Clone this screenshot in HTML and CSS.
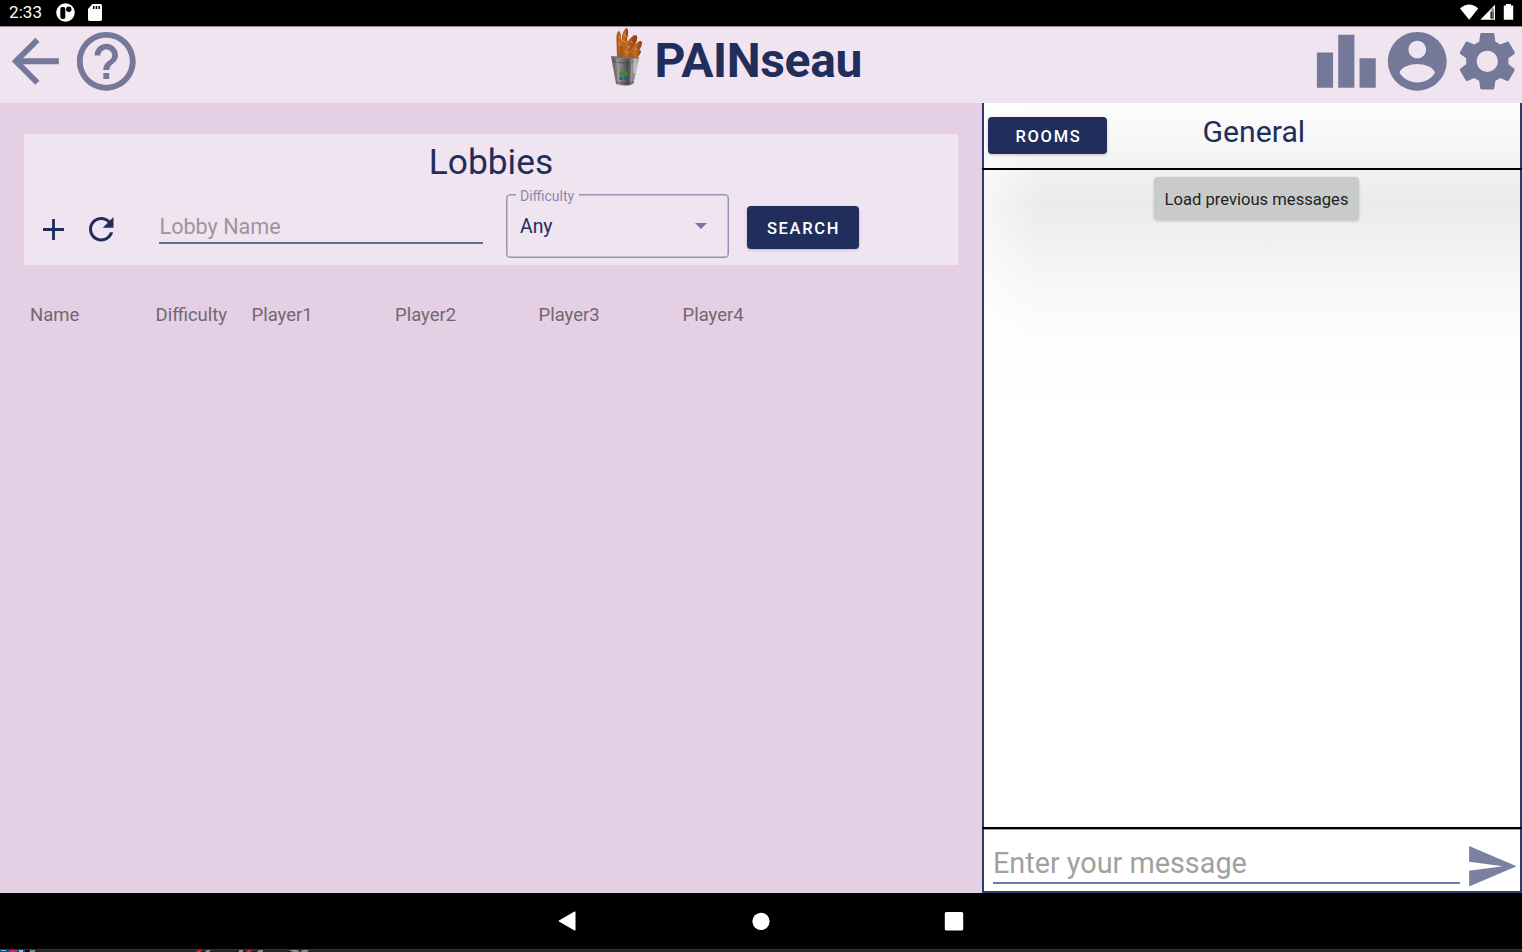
FILE: index.html
```html
<!DOCTYPE html>
<html lang="en">
<head>
<meta charset="utf-8">
<title>PAINseau</title>
<link rel="stylesheet" href="styles.css">
</head>
<body>
<div class="screen">
  <div class="status">
    <span class="clock">2:33</span>
    <svg class="st-app" viewBox="0 0 19 19"><circle cx="9.5" cy="9.5" r="9.3" fill="#fff"/><rect x="4.3" y="4" width="5" height="12" rx="2" fill="#000"/><circle cx="12.8" cy="6.3" r="2.7" fill="#000"/></svg>
    <svg class="st-sd" viewBox="0 0 14 17"><path d="M4.5 0H12.6Q14 0 14 1.400V15.600Q14 17 12.600 17H1.400Q0 17 0 15.600V5Z" fill="#fff"/><path d="M5 2h1.500v3H5zM7.700 2h1.500v3H7.700zM10.400 2h1.500v3h-1.500z" fill="#000"/></svg>
    <svg class="st-right" viewBox="0 0 56 18"><path d="M0 4.500Q9.200-3.300 18.300 4.500L9.200 15.700Z" fill="#fff"/><path d="M35 .8V15.700H20.300Z" fill="#fff"/><path d="M30.500 7.500h3.300v7h-3.300z" fill="#000"/><path d="M31.700 4.300h2v9.500h-2z" fill="#777"/><path d="M46 0h5v1.500h2.200V15.700H43.800V1.500H46z" fill="#fff"/></svg>
  </div>
  <header class="top">
    <div class="icons">
      <svg viewBox="0 0 24 24"><path d="M20 11H7.830l5.590-5.590L12 4l-8 8 8 8 1.410-1.410L7.830 13H20v-2z"/></svg>
      <svg viewBox="0 0 24 24"><path d="M11 18h2v-2h-2v2zm1-16C6.480 2 2 6.480 2 12s4.480 10 10 10 10-4.480 10-10S17.520 2 12 2zm0 18c-4.410 0-8-3.590-8-8s3.590-8 8-8 8 3.590 8 8-3.590 8-8 8zm0-14c-2.210 0-4 1.790-4 4h2c0-1.100.9-2 2-2s2 .9 2 2c0 2-3 1.750-3 5h2c0-2.250 3-2.500 3-5 0-2.210-1.790-4-4-4z"/></svg>
    </div>
    <div class="brand">
      <svg class="bucket" viewBox="0 0 32 58">
        <defs>
          <linearGradient id="metal"><stop offset="0" stop-color="#5b5b5b"/><stop offset=".3" stop-color="#8d8d8b"/><stop offset=".6" stop-color="#4a4a4b"/><stop offset=".82" stop-color="#9b9b9b"/><stop offset="1" stop-color="#77777a"/></linearGradient>
          <linearGradient id="crust"><stop offset="0" stop-color="#96450f"/><stop offset=".5" stop-color="#c36d24"/><stop offset="1" stop-color="#8b3d0e"/></linearGradient>
        </defs>
        <path d="M7 30L6.500 9Q7 3 9 3Q11 4 11 10L12 30Z" fill="url(#crust)"/>
        <path d="M10 30L12 8Q14 0 17 0Q19 3 17.500 9L15 30Z" fill="url(#crust)"/>
        <path d="M14 30L20 12Q24 5 27 8Q28 11 25 17L19 30Z" fill="url(#crust)"/>
        <path d="M8 30L14 18Q21 8 24 8Q27 10 24 16L17 31Z" fill="url(#crust)"/>
        <path d="M17 30L25 17Q30 11 32 14Q32 19 28 24L23 30Z" fill="url(#crust)"/>
        <path d="M20 30L26 24Q30 21 31 23Q31 26 27 30Z" fill="url(#crust)"/>
        <path d="M9 8l1 3M9 14l1 4M14 6l2 3M13 12l3 3M20 13l3 2M17 18l3 2M25 20l2 2M15 23l3 2" stroke="#e2964a" stroke-width="1"/>
        <path d="M1 28Q15 32 29 29L23.500 56Q15 59 6 56Z" fill="url(#metal)"/>
        <path d="M.7 28Q15 29 30 29Q15 33 .7 28Z" fill="#77706a"/>
        <path d="M2 33Q15 37 28 33M6 54Q15 57 24 54" fill="none" stroke="#454648" stroke-width=".8"/>
        <path d="M7 31l2 24M22 32l-1 23" stroke="#b9b9b9" stroke-width="1.300" opacity=".5"/>
        <path d="M24 31l4 0-2 14-3 0z" fill="#c8c8ca" opacity=".8"/>
        <path d="M9 46l1-2 3-1.500 3 .5 2 2-1 3H10z" fill="#398d2d"/>
        <path d="M9.500 49h3v3h-3zM14 49h4l-1 3h-3z" fill="#225c9c"/>
      </svg>
      <h1>PAINseau</h1>
    </div>
    <div class="icons">
      <svg viewBox="0 0 24 24"><path d="M7.500 21H2V9h5.500v12zm7.250-18h-5.500v18h5.500V3zM22 11h-5.500v10H22V11z"/></svg>
      <svg viewBox="0 0 24 24"><path d="M12 2C6.480 2 2 6.480 2 12s4.480 10 10 10 10-4.480 10-10S17.520 2 12 2zm0 3c1.660 0 3 1.340 3 3s-1.340 3-3 3-3-1.340-3-3 1.340-3 3-3zm0 14.200c-2.500 0-4.710-1.280-6-3.220.03-1.990 4-3.080 6-3.080 1.990 0 5.970 1.090 6 3.080-1.290 1.940-3.500 3.220-6 3.220z"/></svg>
      <svg viewBox="0 0 24 24"><path d="M19.14,12.94c0.04-0.3,0.06-0.61,0.06-0.94c0-0.32-0.02-0.64-0.07-0.94l2.03-1.58c0.18-0.14,0.23-0.41,0.12-0.61l-1.92-3.32c-0.12-0.22-0.37-0.29-0.59-0.22l-2.39,0.96c-0.5-0.38-1.03-0.7-1.62-0.94L14.4,2.81c-0.04-0.24-0.24-0.41-0.48-0.41h-3.84c-0.24,0-0.43,0.17-0.47,0.41L9.25,5.35C8.66,5.59,8.12,5.92,7.63,6.29L5.24,5.33c-0.22-0.08-0.47,0-0.59,0.22L2.74,8.87C2.62,9.08,2.66,9.34,2.86,9.48l2.03,1.58C4.84,11.36,4.8,11.69,4.8,12s0.02,0.64,0.07,0.94l-2.03,1.58c-0.18,0.14-0.23,0.41-0.12,0.61l1.92,3.32c0.12,0.22,0.37,0.29,0.59,0.22l2.39-0.96c0.5,0.38,1.03,0.7,1.62,0.94l0.36,2.54c0.05,0.24,0.24,0.41,0.48,0.41h3.84c0.24,0,0.44-0.17,0.47-0.41l0.36-2.54c0.59-0.24,1.13-0.56,1.62-0.94l2.39,0.96c0.22,0.08,0.47,0,0.59-0.22l1.92-3.32c0.12-0.22,0.07-0.47-0.12-0.61L19.14,12.94z M12,15.6c-1.98,0-3.6-1.62-3.6-3.6s1.62-3.6,3.6-3.6s3.6,1.62,3.6,3.6S13.98,15.6,12,15.6z"/></svg>
    </div>
  </header>
  <main class="main">
    <section class="lobby">
      <div class="card">
        <h2>Lobbies</h2>
        <div class="filters">
          <svg class="add" viewBox="0 0 22 22"><path d="M9.500 0h3v9.500H22v3h-9.500V22h-3v-9.500H0v-3h9.500z"/></svg>
          <svg class="refresh" viewBox="4 4 16 16"><path d="M17.650 6.350C16.200 4.900 14.210 4 12 4c-4.420 0-7.990 3.580-7.990 8s3.570 8 7.990 8c3.730 0 6.840-2.550 7.730-6h-2.080c-.82 2.330-3.040 4-5.650 4-3.310 0-6-2.690-6-6s2.690-6 6-6c1.660 0 3.140.69 4.220 1.780L13 11h7V4l-2.350 2.350z"/></svg>
          <div class="name-field"><span>Lobby Name</span></div>
          <div class="select"><span class="legend">Difficulty</span><span class="value">Any</span><i class="caret"></i></div>
          <button class="btn search">SEARCH</button>
        </div>
      </div>
      <div class="cols"><span>Name</span><span>Difficulty</span><span>Player1</span><span>Player2</span><span>Player3</span><span>Player4</span></div>
    </section>
    <aside class="chat">
      <div class="chat-head"><button class="btn rooms">ROOMS</button><h3>General</h3></div>
      <div class="messages"><button class="load">Load previous messages</button></div>
      <div class="compose">
        <div class="msg-field"><span>Enter your message</span></div>
        <svg class="send" viewBox="2 3 21 18"><path d="M2.010 21L23 12 2.010 3 2 10l15 2-15 2z"/></svg>
      </div>
    </aside>
  </main>
  <nav class="nav">
    <svg viewBox="0 0 20 20"><path d="M18.500.8V19.200Q18.200 19.800 17.500 19.400L1.900 10.600Q1.300 10 1.900 9.400L17.500.6Q18.200.2 18.500.8Z"/></svg>
    <svg viewBox="0 0 20 20"><circle cx="10" cy="10.300" r="8.600"/></svg>
    <svg viewBox="0 0 20 20"><rect x=".8" y="1" width="18.400" height="18.400" rx="1.500"/></svg>
  </nav>
  <svg class="strip" viewBox="0 0 1522 3"><path d="M0 0h1522v3H0z" fill="#242429"/><path d="M0 0h1522v1H0z" fill="#333338"/><path d="M0 1h25v2H0z" fill="#0a4f8c"/><path d="M1 1h5v1H1zM19 1h4v2h-4z" fill="#93bbd0"/><path d="M10 1h8l-2 2H9z" fill="#d01e6c"/><path d="M25 1h4v2h-4z" fill="#050505"/><path d="M30 1h5v2h-5z" fill="#6c8c85"/><path d="M198 1h4l-2 2h-4zM248 1h4l-2 2h-4z" fill="#d32a2a"/><path d="M207 1h4l-2 2h-4zM239 1h4v2h-4zM259 1h4v2h-6zM289 1h8l3 2h-7zM302 1h7l-2 2h-6z" fill="#8b8b8d"/></svg>
</div>
</body>
</html>
```
FILE: styles.css
```css
* { box-sizing: border-box; }
body { margin: 0; font-family: Roboto, sans-serif; }
h1, h2, h3 { margin: 0; font-weight: 400; color: #212d5b; white-space: nowrap; }
button { font-family: inherit; border: 0; padding: 0; white-space: nowrap; }
svg { display: block; flex: none; }
.screen { width: 1522px; height: 952px; overflow: hidden; display: flex; flex-direction: column; background: #000; }

.status { height: 26px; flex: none; display: flex; align-items: center; padding: 0 6px 1px 9px; color: #fff; }
.clock { font-size: 17px; width: 47px; line-height: 25px; letter-spacing: .1px; }
.st-app { width: 19px; height: 19px; margin-right: 13px; }
.st-sd { width: 14px; height: 17px; }
.st-right { width: 56px; height: 18px; margin-left: auto; }

.top { height: 77px; flex: none; display: grid; grid-template-columns: 1fr 251px 1fr; background: #f1e4f1; border-top: 1px solid #8d868d; }
.icons { display: flex; margin-top: -1px; }
.icons:last-child { justify-content: flex-end; margin-right: -.8px; }
.icons svg { width: 70.6px; height: 70.6px; fill: #747899; }
.brand { display: flex; margin-left: -26px; margin-right: 26px; }
.bucket { width: 32px; height: 58px; margin: 1px 13px 0 0; }
.brand h1 { font-size: 48px; font-weight: 700; line-height: 68px; letter-spacing: -.36px; }

.main { height: 790px; flex: none; display: grid; grid-template-columns: 982px 540px; }
.lobby { background: #e5cfe5; padding: 31px 24px 0; }
.card { height: 131px; background: #f1e4f1; }
.card h2 { font-size: 35.3px; line-height: 57px; height: 60px; text-align: center; }
.filters { display: flex; padding-left: 19px; }
.filters svg { fill: #212d5b; }
.add { width: 21px; height: 21px; margin: 25px 25px 0 0; }
.refresh { width: 24.500px; height: 24.500px; margin: 23px 45.500px 0 0; }
.name-field { width: 324px; height: 50px; border-bottom: 2px solid #666d93; padding: 18px 0 0 .5px; color: #9d949e; font-size: 21.600px; line-height: 30px; margin-right: 23px; }
.select { width: 223px; height: 64px; border: 1.500px solid #9495b4; box-shadow: inset 0 0 0 .5px #9495b4; border-radius: 4px; position: relative; display: flex; align-items: center; justify-content: space-between; padding: 1px 21.500px 0 13px; margin-right: 18px; color: #212d5b; }
.legend { position: absolute; left: 9px; top: -7px; background: #f1e4f1; padding: 0 5px 0 4px; font-size: 14px; line-height: 16px; color: #8789a8; }
.value { font-size: 19.400px; }
.caret { border: 6px solid transparent; border-top-color: #747899; border-bottom: 0; margin-top: -1px; }
.btn { background: #212d5b; color: #fff; font-weight: 500; border-radius: 4px; box-shadow: 0 1px 3px rgba(50, 30, 60, .25); }
.search { width: 112px; height: 43px; margin-top: 12px; padding: 1px 0 0 1px; font-size: 16.500px; letter-spacing: 1.650px; }
.cols { display: grid; grid-template-columns: 125.500px 96px 143.500px 143.500px 144px auto; padding: 38px 0 0 6px; font-size: 18.500px; line-height: 24px; color: #716771; }

.chat { display: flex; flex-direction: column; border: 2px solid #2e3a6e; border-top: 0; background: linear-gradient(90deg, #ffffff90, #ffffff00 56px), linear-gradient(#fdfdfd, #f2f2f2 65px, #ebebeb 101px, #f0f0f0 137px, #f7f7f7 180px, #fcfcfc 225px, #fff 300px); }
.chat-head { height: 67px; margin: 0 -2px; border-bottom: 2px solid #000; display: flex; padding: 14px 0 0 6px; }
.rooms { width: 119px; height: 37px; padding: 2px 0 0 2px; font-size: 16.500px; letter-spacing: 1.700px; }
.chat-head h3 { font-size: 30.200px; line-height: 34px; margin: -2px 0 0 95.500px; }
.messages { flex: 1; display: flex; justify-content: center; align-items: flex-start; padding: 7px 0 0 9px; }
.load { width: 205px; height: 43px; border-radius: 4px; background: #c9cbca; color: #222; font-size: 16.600px; padding-top: 1px; box-shadow: 0 1px 3px #0003; }
.compose { height: 64px; margin: 0 -2px; border-top: 2px solid #000; background: linear-gradient(#999 1px, transparent 1px) 2px 0 / 536px 64px no-repeat; display: flex; padding: 0 6px 0 11px; }
.msg-field { width: 467px; height: 55px; border-bottom: 2px solid #7279a2; font-size: 28.800px; line-height: 36px; padding-top: 16px; color: #a1a1a1; margin-right: 8.500px; }
.send { width: 47.500px; height: 40.500px; margin-top: 16.500px; fill: #7a809f; }
.name-field, .msg-field, .load { white-space: nowrap; }

.nav { height: 56px; flex: none; display: flex; justify-content: center; gap: 173.500px; padding: 18px 1px 0 0; }
.nav svg { width: 20px; height: 20px; fill: #fff; }
.strip { width: 1522px; height: 3px; }
```
